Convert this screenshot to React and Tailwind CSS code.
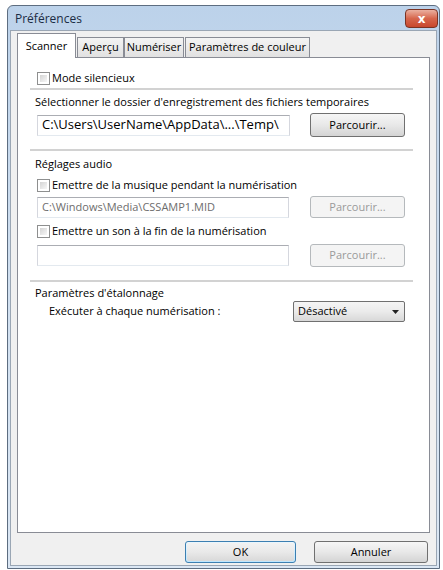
import React from 'react';

const Checkbox = () => (
  <div className="w-[13px] h-[13px] border border-[#8e8f8f] bg-white p-[2px] shrink-0">
    <div className="w-full h-full bg-gradient-to-br from-[#d4d4d4] to-[#f7f7f7]" />
  </div>
);

const Separator = ({ className = '' }) => <div className={`h-[2px] bg-[#d2d2d2] ${className}`} />;

const Button = ({ label, disabled, def, className = '' }) => {
  if (disabled) {
    return (
      <div className={`flex items-center justify-center rounded-[3px] border border-[#b5b9bc] bg-[#f4f4f4] text-[11px] text-[#9a9a9a] ${className}`}>
        {label}
      </div>
    );
  }
  if (def) {
    return (
      <div className={`rounded-[3px] border border-[#3c7fb1] p-px bg-gradient-to-b from-[#eaf6fd] to-[#bee6fd] ${className}`}>
        <div className="w-full h-full rounded-[2px] flex items-center justify-center bg-gradient-to-b from-[#f2f2f2] via-[#e9e9e9] to-[#d9d9d9] text-[11px] text-black">
          {label}
        </div>
      </div>
    );
  }
  return (
    <div className={`flex items-center justify-center rounded-[3px] border border-[#707070] bg-gradient-to-b from-[#f6f6f6] via-[#e8e8e8] to-[#d4d4d4] text-[11px] text-black ${className}`}>
      {label}
    </div>
  );
};

const Field = ({ children, className = '' }) => (
  <div className={`flex items-center border border-[#abadb3] border-l-[#d5d7de] border-r-[#d5d7de] border-b-[#e3e9ef] bg-white px-[4px] overflow-hidden whitespace-nowrap ${className}`}>
    {children}
  </div>
);

const Tab = ({ label, active, className = '' }) =>
  active ? (
    <div className={`relative z-10 -mb-px h-[25px] border border-b-0 border-[#898c95] bg-white flex items-start justify-center pt-[4px] text-[11px] text-black ${className}`}>
      {label}
    </div>
  ) : (
    <div className={`h-[20px] border border-b-0 border-[#898c95] bg-gradient-to-b from-[#f4f4f4] to-[#e1e1e1] flex items-center justify-center text-[11px] text-black ${className}`}>
      {label}
    </div>
  );

export default function App() {
  return (
    <div className="w-[443px] h-[570px] bg-white pl-[7px] pt-[5px] font-['Open_Sans','Noto_Sans',sans-serif] text-black">
      <div className="w-[433px] h-[564px] rounded-t-[6px] border border-[#5d6d80] bg-gradient-to-b from-[#bcd2ea] via-[#d2e1f1] to-[#dbe7f4] flex flex-col px-[2px] pb-[2px]">
        {/* title bar */}
        <div className="h-[24px] flex items-start justify-between shrink-0">
          <div className="pl-[5px] pt-[5px] text-[12px] leading-[16px] text-[#1b2c44]">Préférences</div>
          <div className="mt-[3px] -mr-px w-[33px] h-[19px] rounded-[4px] border border-[#7a3324] bg-gradient-to-b from-[#eab0a0] via-[#d6664c] to-[#c8472d] flex items-center justify-center">
            <span className="text-white text-[12px] font-bold leading-none font-['DejaVu_Sans',sans-serif]">x</span>
          </div>
        </div>

        {/* client area */}
        <div className="flex-1 bg-[#f0f0f0] border border-[#9aa6b4] flex flex-col px-[6px] pt-[2px]">
          {/* tabs */}
          <div className="flex items-end h-[24px]">
            <Tab label="Scanner" active className="w-[59px]" />
            <Tab label="Aperçu" className="ml-[1px] w-[47px]" />
            <Tab label="Numériser" className="w-[60px]" />
            <Tab label="Paramètres de couleur" className="ml-[1px] w-[125px]" />
          </div>

          {/* panel */}
          <div className="h-[476px] border border-[#898c95] bg-white flex flex-col pl-[12px] pr-[16px] pt-[12px] text-[11px]">
            <div className="h-[16px] flex items-center ml-[7px] gap-[2px]">
              <Checkbox />
              <span>Mode silencieux</span>
            </div>
            <Separator className="mt-[2px]" />

            <div className="mt-[5px] h-[14px] leading-[14px] ml-[5px]">
              Sélectionner le dossier d'enregistrement des fichiers temporaires
            </div>
            <div className="mt-[4px] h-[24px] flex items-center ml-[7px]">
              <Field className="w-[253px] h-[21px] text-[13px] text-black">C:\Users\UserName\AppData\...\Temp\</Field>
              <Button label="Parcourir..." className="ml-[20px] w-[95px] h-[24px]" />
            </div>
            <Separator className="mt-[12px]" />

            <div className="mt-[6px] h-[14px] leading-[14px] ml-[5px]">Réglages audio</div>
            <div className="mt-[6px] h-[16px] flex items-center ml-[7px] gap-[2px]">
              <Checkbox />
              <span>Emettre de la musique pendant la numérisation</span>
            </div>
            <div className="mt-[3px] h-[22px] flex items-center ml-[7px]">
              <Field className="w-[252px] h-[21px] text-[11px] text-[#6d6d6d]">C:\Windows\Media\CSSAMP1.MID</Field>
              <Button label="Parcourir..." disabled className="ml-[21px] w-[95px] h-[22px]" />
            </div>
            <div className="mt-[5px] h-[16px] flex items-center ml-[7px] gap-[2px]">
              <Checkbox />
              <span>Emettre un son à la fin de la numérisation</span>
            </div>
            <div className="mt-[5px] h-[23px] flex items-center ml-[7px]">
              <Field className="w-[252px] h-[21px]" />
              <Button label="Parcourir..." disabled className="ml-[21px] w-[95px] h-[23px]" />
            </div>
            <Separator className="mt-[13px]" />

            <div className="mt-[4px] h-[14px] leading-[14px] ml-[5px]">Paramètres d'étalonnage</div>
            <div className="mt-[1px] h-[21px] flex items-center">
              <span className="ml-[19px]">Exécuter à chaque numérisation :</span>
              <div className="ml-auto mr-[8px] w-[112px] h-[21px] rounded-[2px] border border-[#707070] bg-gradient-to-b from-[#f5f5f5] via-[#ebebeb] to-[#d8d8d8] flex items-center justify-between pl-[4px] pr-[5px]">
                <span>Désactivé</span>
                <svg width="7" height="4" viewBox="0 0 7 4">
                  <path d="M0 0 H7 L3.5 4 Z" fill="#222" />
                </svg>
              </div>
            </div>
          </div>

          {/* bottom buttons */}
          <div className="mt-[8px] flex justify-end pr-[2px] gap-[18px]">
            <Button label="OK" def className="w-[111px] h-[22px]" />
            <Button label="Annuler" className="w-[114px] h-[22px]" />
          </div>
        </div>
      </div>
    </div>
  );
}
